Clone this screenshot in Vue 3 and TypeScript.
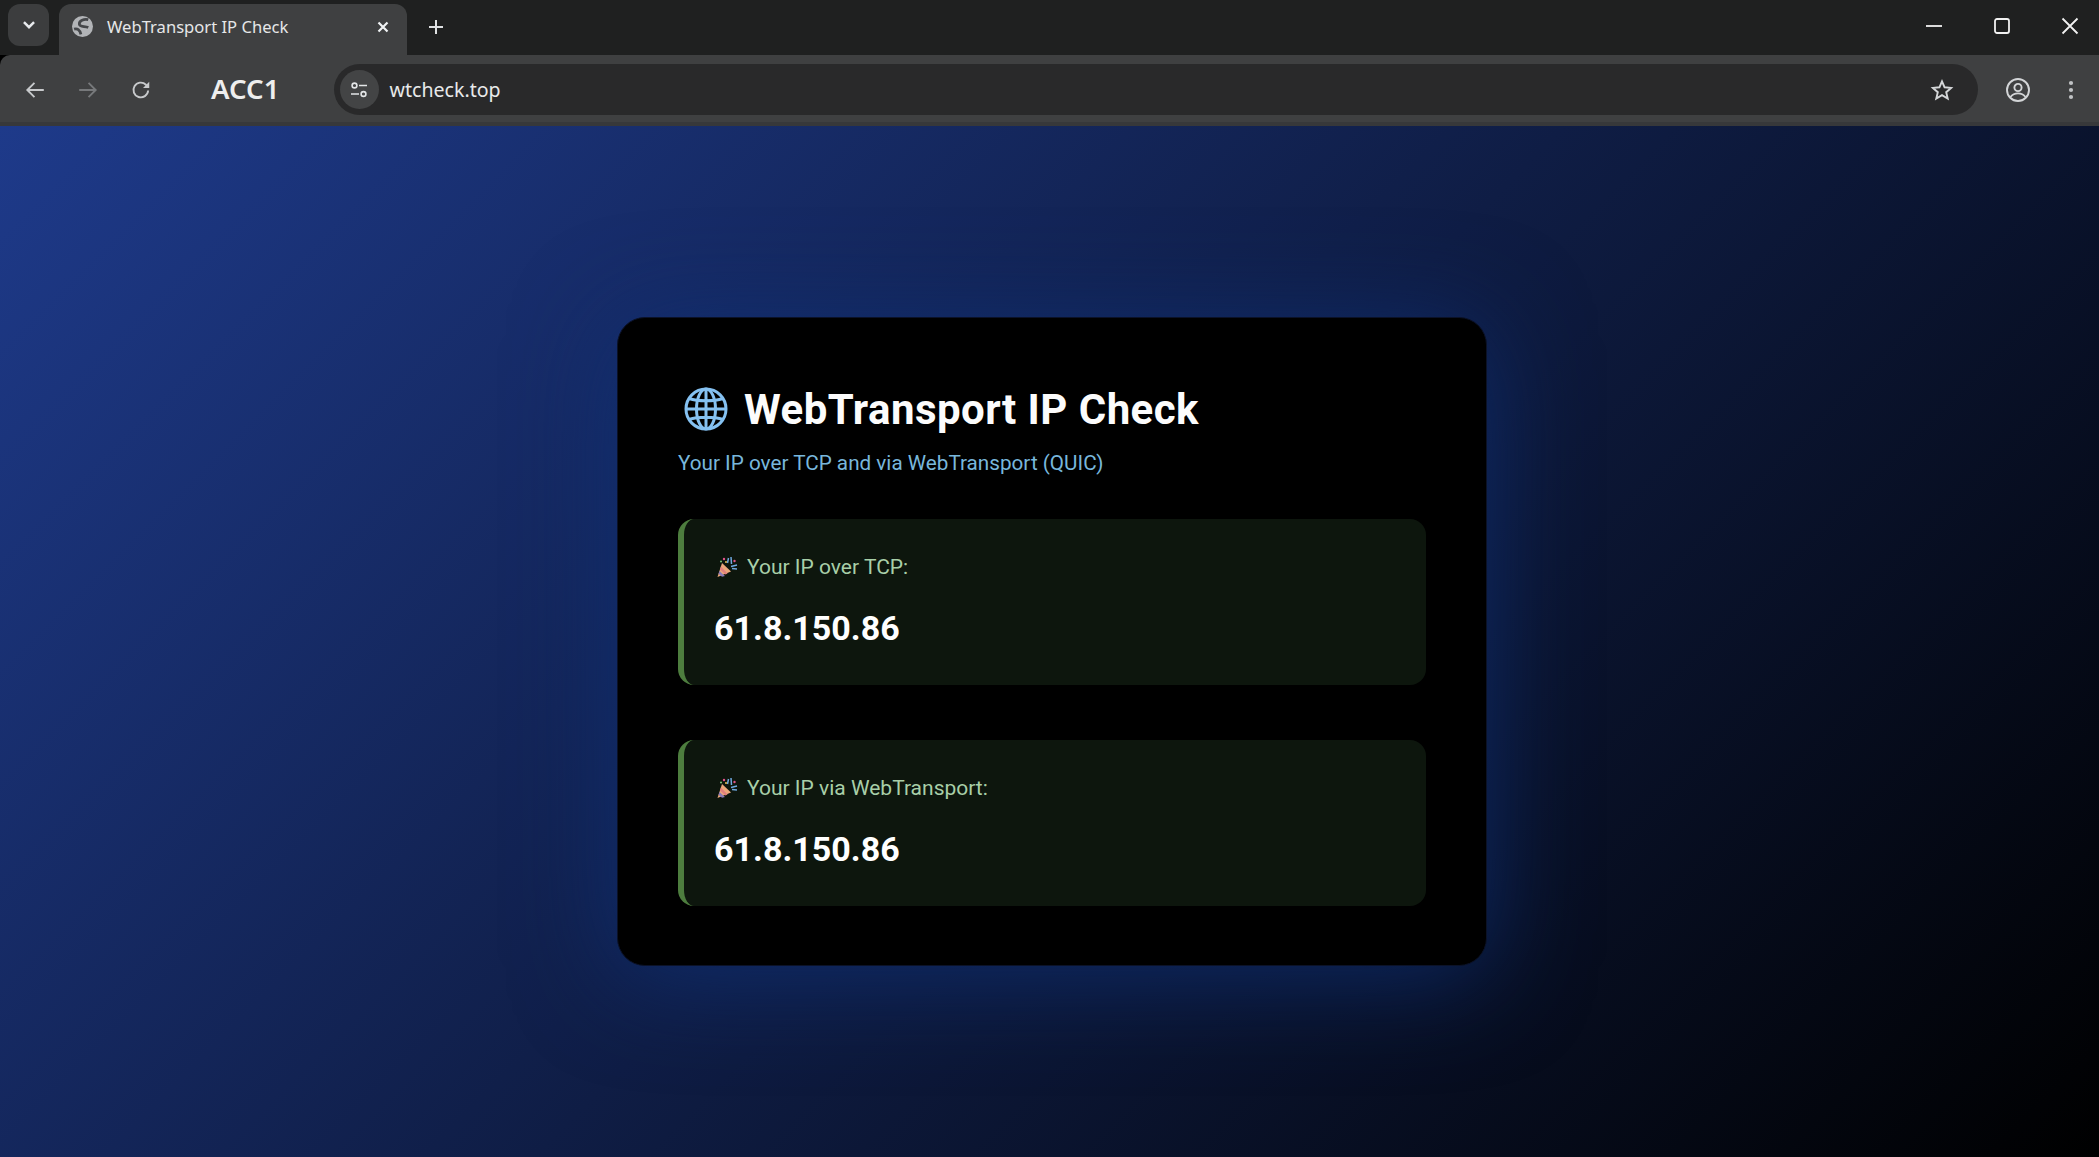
<script setup lang="ts">
interface Result { label: string; ip: string }
const results: Result[] = [
  { label: 'Your IP over TCP:', ip: '61.8.150.86' },
  { label: 'Your IP via WebTransport:', ip: '61.8.150.86' },
]
</script>

<template>
  <div class="window">
    <header class="tabstrip">
      <button class="tabsearch">
        <svg width="18" height="18" viewBox="0 0 16 16"><path d="M3.500 5.500 8 10l4.500-4.500" fill="none" stroke="#e8eaed" stroke-width="2.200"/></svg>
      </button>
      <div class="tab">
        <svg class="favicon" width="21" height="21" viewBox="0 0 20 20">
          <circle cx="10" cy="10" r="10" fill="#b2b4b7"/>
          <path d="M15.500 3.500C11.500 2.500 6.500 4.500 7 8c.4 2.800 5.500 1.500 8.500 3M2 12.500c3-1 5.500.5 6.500 5" fill="none" stroke="#45474a" stroke-width="2.600"/>
        </svg>
        <span class="tabtitle">WebTransport IP Check</span>
        <svg class="tabclose" width="14" height="14" viewBox="0 0 14 14"><path d="M2.500 2.500l9 9m0-9-9 9" stroke="#f1f3f4" stroke-width="2.200"/></svg>
      </div>
      <svg class="newtab" width="18" height="18" viewBox="0 0 18 18"><path d="M9 2v14M2 9h14" stroke="#dfe1e3" stroke-width="2"/></svg>
      <div class="winctrls">
        <svg width="18" height="18" viewBox="0 0 18 18"><path d="M1 9h16" stroke="#f1f1f1" stroke-width="1.800"/></svg>
        <svg width="18" height="18" viewBox="0 0 18 18"><rect x="2" y="2" width="14" height="14" rx="2" fill="none" stroke="#f1f1f1" stroke-width="1.800"/></svg>
        <svg width="18" height="18" viewBox="0 0 18 18"><path d="M1.500 1.500l15 15m0-15-15 15" stroke="#f1f1f1" stroke-width="1.800"/></svg>
      </div>
    </header>

    <nav class="toolbar">
      <svg class="navicon" width="22" height="22" viewBox="0 0 20 20"><path d="M18 10H3m6.500-6.500L3 10l6.500 6.500" fill="none" stroke="#c8cacc" stroke-width="1.700"/></svg>
      <svg class="navicon fwd" width="22" height="22" viewBox="0 0 20 20"><path d="M2 10h15m-6.500-6.500L17 10l-6.500 6.500" fill="none" stroke="#77797b" stroke-width="1.700"/></svg>
      <svg class="navicon reload" width="22" height="22" viewBox="0 0 20 20"><path d="M16.500 10.500a6.700 6.700 0 1 1-2-5.300l2.300 2" fill="none" stroke="#c8cacc" stroke-width="1.700"/><path d="M17.500 2.500v5.700h-5.700z" fill="#c8cacc"/></svg>
      <span class="profile">ACC1</span>
      <div class="omnibox">
        <span class="siteinfo">
          <svg width="20" height="20" viewBox="0 0 20 20" fill="none" stroke="#e3e5e7" stroke-width="1.600"><circle cx="5.500" cy="5.500" r="2.400"/><path d="M10 5.500h8M2 14h8"/><circle cx="14.500" cy="14" r="2.400"/></svg>
        </span>
        <span class="url">wtcheck.top</span>
        <svg class="star" width="24" height="24" viewBox="0 0 24 24"><path d="M12 3.300l2.600 6 6.500.6-4.900 4.300 1.500 6.400L12 17.200l-5.700 3.400 1.500-6.400-4.900-4.300 6.500-.6z" fill="none" stroke="#d5d7d9" stroke-width="1.900"/></svg>
      </div>
      <svg class="account" width="26" height="26" viewBox="0 0 26 26" fill="none" stroke="#d3d5d7" stroke-width="1.900"><circle cx="13" cy="13" r="11"/><circle cx="13" cy="10.500" r="3.600"/><path d="M5.500 20c2-2.600 4.800-3.600 7.500-3.600s5.500 1 7.500 3.600"/></svg>
      <svg class="menu" width="6" height="22" viewBox="0 0 6 22" fill="#c0c2c4"><circle cx="3" cy="4" r="2.100"/><circle cx="3" cy="11" r="2.100"/><circle cx="3" cy="18" r="2.100"/></svg>
    </nav>

    <main class="page">
      <section class="card">
        <h1 class="title">
          <svg class="globe" width="46" height="46" viewBox="0 0 46 46" fill="none" stroke="#85c1f1" stroke-width="3">
            <circle cx="23" cy="23" r="20"/>
            <ellipse cx="23" cy="23" rx="9.500" ry="20"/>
            <path d="M23 3v40M3 23h40M6 12.500c9 3 25 3 34 0M6 33.500c9-3 25-3 34 0"/>
          </svg>
          <span>WebTransport IP Check</span>
        </h1>
        <p class="subtitle">Your IP over TCP and via WebTransport (QUIC)</p>
        <div class="results">
          <article v-for="r in results" :key="r.label" class="result">
            <div class="label">
              <svg class="popper" width="22" height="22" viewBox="0 0 22 22">
                <path d="M1.500 21 6 7l9 8.500z" fill="#eca77a"/>
                <path d="M3.500 15l5.500 5-3 .8-3.500-3z" fill="#8a7bb8"/>
                <path d="M5 10.500l6.500 7-2 1-5.500-5z" fill="#e2807e"/>
                <path d="M12.500 2l-1 5M15 1l.5 7M21 9l-6 1.500M21 13l-5-.5" stroke="#6fa9e0" stroke-width="1.500" fill="none"/>
                <circle cx="8" cy="3" r="1.200" fill="#e0558a"/><circle cx="10" cy="6" r="1" fill="#e8c04f"/><circle cx="18.500" cy="5" r="1.200" fill="#e0558a"/><circle cx="5" cy="5.500" r="1" fill="#7fc77a"/>
              </svg>
              <span>{{ r.label }}</span>
            </div>
            <div class="ip">{{ r.ip }}</div>
          </article>
        </div>
      </section>
    </main>
  </div>
</template>

<style>
html, body { margin: 0; height: 100%; background: #000; }
</style>

<style scoped>
.window { width: 2099px; height: 1157px; display: flex; flex-direction: column; overflow: hidden; font-family: Roboto, sans-serif; }
.tabstrip { height: 55px; flex: none; background: #1f2020; display: flex; align-items: center; padding-left: 8px; box-sizing: border-box; }
.tabsearch { width: 41px; height: 42px; margin-top: -5px; border: 0; padding: 0; background: #3c3d3e; border-radius: 12px; display: flex; align-items: center; justify-content: center; flex: none; }
.tab { width: 348px; height: 51px; margin: 4px 0 0 10px; background: #3f4041; border-radius: 12px 12px 0 0; display: flex; align-items: center; padding: 0 17px 6px 13px; box-sizing: border-box; flex: none; }
.favicon { flex: none; }
.tabtitle { margin-left: 14px; flex: 1; font: 16.600px "Noto Sans", sans-serif; color: #e6e7e8; white-space: nowrap; }
.tabclose { flex: none; }
.newtab { margin: -2px 0 0 20px; flex: none; }
.winctrls { margin-left: auto; display: flex; gap: 50px; padding-right: 20px; margin-top: -3px; }
.toolbar { height: 71px; flex: none; background: #3f4041; display: flex; align-items: center; box-sizing: border-box; padding-top: 2px; border-bottom: 4px solid #37383a; border-top-left-radius: 10px; }
.navicon { flex: none; }
.navicon:first-child { margin-left: 24px; }
.fwd { margin-left: 31px; }
.reload { margin-left: 31px; }
.profile { margin-left: 59px; width: 122.500px; font: 600 27.600px/1.200 "Noto Sans", sans-serif; color: #eeeeee; flex: none; padding-bottom: 2px; }
.omnibox { width: 1644px; height: 51px; background: #29292a; border-radius: 26px; display: flex; align-items: center; padding: 0 24px 0 6px; box-sizing: border-box; flex: none; }
.siteinfo { width: 39px; height: 39px; border-radius: 50%; background: #434445; display: flex; align-items: center; justify-content: center; flex: none; }
.url { margin-left: 11px; font: 19.600px "Noto Sans", sans-serif; color: #e8e9ea; flex: 1; }
.star { flex: none; }
.account { margin-left: 27px; flex: none; }
.menu { margin-left: 37px; flex: none; }
.page { flex: 1; min-height: 0; display: flex; align-items: center; justify-content: center; padding-left: 5px; box-sizing: border-box; background: linear-gradient(135deg, #1e3a8a, #000); }
.card { width: 870px; height: 649px; background: #000; border: 1px solid #0b1228; border-radius: 28px; padding: 60px 60px; box-sizing: border-box; box-shadow: 0 10px 100px rgba(15,50,120,.75); }
.title { margin: 0; height: 62px; display: flex; align-items: center; gap: 15px; font: 700 42px Roboto, sans-serif; letter-spacing: .45px; color: #fcfcfc; padding-left: 5px; }
.globe { flex: none; }
.subtitle { margin: 11px 0 0; font: 20.700px Roboto, sans-serif; color: #78b7dc; }
.results { margin-top: 44px; display: flex; flex-direction: column; gap: 55px; }
.result { height: 166px; background: #0d160d; border-left: 6px solid #4d7d3e; border-radius: 16px; padding: 36px 30px; box-sizing: border-box; }
.label { display: flex; align-items: center; gap: 9px; font: 21px Roboto, sans-serif; color: #a8cfa8; padding-left: 2px; }
.ip { margin-top: 29px; font: 700 34px Roboto, sans-serif; color: #fff; }
</style>
